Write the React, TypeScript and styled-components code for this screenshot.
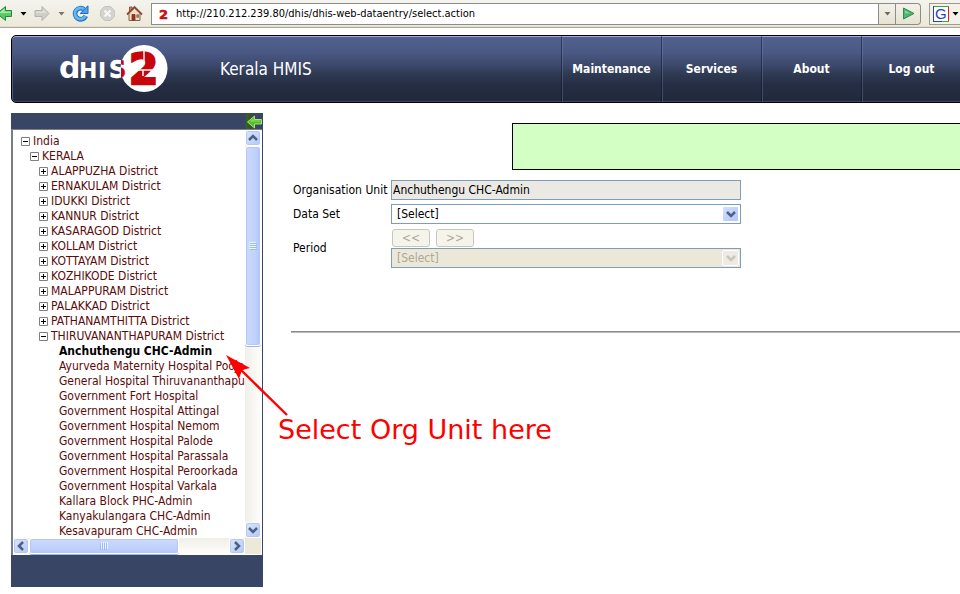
import React from "react";
import styled, { createGlobalStyle, css } from "styled-components";

const GlobalStyle = createGlobalStyle`
  *, *::before, *::after { box-sizing: border-box; }
  body {
    margin: 0;
    overflow: hidden;
    background: #fff;
    color: #000;
    font: 12px/15px "DejaVu Sans Condensed", "DejaVu Sans", sans-serif;
  }
  button, input, select { font: inherit; color: inherit; margin: 0; }
  ul { list-style: none; margin: 0; padding: 0; }
`;

const Page = styled.div`
  position: relative;
  height: 100vh;
  display: flex;
  flex-direction: column;
  overflow: hidden;
`;

/* ---------- browser toolbar ---------- */

const BrowserBar = styled.div`
  flex: none;
  height: 28px;
  display: flex;
  align-items: center;
  background: linear-gradient(#f4f3ee, #ece9d8);
  border-bottom: 1px solid #aca899;
  box-shadow: inset 0 -1px #e2dfce;
`;

const NavTools = styled.div`
  flex: none;
  width: 151px;
  display: flex;
  align-items: center;
`;

const ToolButton = styled.button<{ $w: number }>`
  width: ${(p) => p.$w}px;
  height: 20px;
  display: flex;
  align-items: center;
  justify-content: center;
  padding: 0;
  border: 0;
  background: none;
  svg { flex: none; display: block; }
`;

const AddressBox = styled.div`
  flex: 1;
  height: 22px;
  display: flex;
  align-items: center;
  padding-left: 6px;
  background: #fff;
  border: 1px solid #8c8c8c;
`;

const AddressInput = styled.input`
  flex: 1;
  min-width: 0;
  height: 18px;
  padding: 0;
  border: 0;
  outline: 0;
  background: transparent;
  && { margin-left: 6px; font-size: 11px; }
`;

const BarButton = styled.button<{ $w: number; $round?: boolean }>`
  flex: none;
  width: ${(p) => p.$w}px;
  height: 22px;
  display: flex;
  align-items: center;
  justify-content: center;
  padding: 0;
  border: 1px solid #8c8c8c;
  border-left: 0;
  border-radius: ${(p) => (p.$round ? "0 4px 4px 0" : "0")};
  background: linear-gradient(#f3f1e8, #e6e3d3);
`;

const SearchEngine = styled.button`
  flex: none;
  width: 31px;
  height: 22px;
  display: flex;
  align-items: center;
  gap: 3px;
  padding: 0 0 0 3px;
  border: 1px solid #9d9b90;
  border-right: 0;
  background: #f3f1e8;
  && { margin-left: 8px; }
`;

/* ---------- application header ---------- */

const Header = styled.header`
  flex: none;
  height: 68px;
  display: flex;
  align-items: stretch;
  margin: 7px -8px 0 11px;
  padding-right: 6px;
  border: 1px solid #000;
  border-radius: 5px;
  color: #fff;
  background: linear-gradient(#53618f, #4a5884 25%, #3c486a 45%, #303b55 56%, #242d42 75%, #212a3c);
  box-shadow: inset 0 1px #a5abe0, inset 1px 0 #4d5a88, inset 0 -1px #3a4463;
`;

const Brand = styled.a`
  flex: none;
  width: 208px;
  display: flex;
  align-items: center;
  padding-left: 46px;
`;

const Title = styled.h1`
  flex: 1;
  align-self: center;
  margin: 0;
  font-size: 17px;
  line-height: 22px;
  font-weight: normal;
`;

const Menu = styled.nav`
  display: flex;
`;

const MenuLink = styled.a`
  width: 100px;
  display: flex;
  align-items: center;
  justify-content: center;
  color: #fff;
  font-weight: bold;
  text-decoration: none;
  border-left: 1px solid rgba(15, 20, 40, 0.5);
  box-shadow: inset 1px 0 rgba(130, 145, 190, 0.3);
`;

/* ---------- body ---------- */

const Body = styled.div`
  flex: 1;
  min-height: 0;
  display: flex;
  padding: 10px 0 7px 11px;
`;

const Sidebar = styled.aside`
  flex: none;
  width: 252px;
  display: flex;
  flex-direction: column;
  background: #384565;
`;

const SidebarTop = styled.div`
  flex: none;
  height: 16px;
  display: flex;
  justify-content: flex-end;
`;

const HideButton = styled.button`
  width: 17px;
  height: 16px;
  padding: 0;
  border: 0;
  background: linear-gradient(90deg, #2c6d10, #38542f 3px, #384565 9px);
  svg { display: block; }
`;

const SidebarFoot = styled.div`
  flex: none;
  height: 32px;
`;

const TreePane = styled.div`
  flex: 1;
  min-height: 0;
  display: grid;
  grid-template-columns: 1fr 16px;
  grid-template-rows: 1fr 16px;
  margin-right: 1px;
  padding: 0 1px 1px 0;
  border: 1px solid #7b7d84;
  border-width: 1px 0 0 2px;
  background: #fff;
`;

const TreeView = styled.div`
  min-height: 0;
  overflow: hidden;
  padding: 4px 0 0 8px;
`;

const Branch = styled.ul<{ $nested?: boolean }>`
  padding-left: ${(p) => (p.$nested ? "9px" : "0")};
`;

const TreeRow = styled.div<{ $leaf?: boolean }>`
  height: 15px;
  display: flex;
  align-items: center;
  gap: 3px;
  padding-left: ${(p) => (p.$leaf ? "11px" : "0")};
  white-space: nowrap;
`;

const Toggle = styled.button`
  flex: none;
  width: 9px;
  height: 9px;
  padding: 0;
  border: 0;
  background: none;
  svg { display: block; }
`;

const UnitLink = styled.a<{ $selected?: boolean }>`
  color: #5c0a0a;
  text-decoration: none;
  ${(p) => p.$selected && css`
    color: #000;
    font-weight: bold;
  `}
`;

const ScrollTrack = styled.div<{ $horizontal?: boolean }>`
  display: flex;
  flex-direction: ${(p) => (p.$horizontal ? "row" : "column")};
  min-height: 0;
  background: linear-gradient(${(p) => (p.$horizontal ? "180deg" : "90deg")}, #f0efe8, #fefefb);
`;

const ScrollButton = styled.button`
  flex: none;
  width: 16px;
  height: 16px;
  padding: 0;
  display: flex;
  align-items: center;
  justify-content: center;
  border: 1px solid #fff;
  border-radius: 3px;
  background: linear-gradient(135deg, #dbe5fe, #b4c8f8);
  box-shadow: inset 0 0 0 1px #b6c8f2;
`;

const ScrollThumb = styled.div<{ $horizontal?: boolean }>`
  flex: ${(p) => (p.$horizontal ? "149" : "198")} 0 0;
  display: flex;
  align-items: center;
  justify-content: center;
  border: 1px solid #fff;
  border-radius: 3px;
  background: linear-gradient(${(p) => (p.$horizontal ? "180deg" : "90deg")}, #cbdafd, #bfd0fb 70%, #b0c4f5);
  box-shadow: inset 0 0 0 1px #b4c7f5, 0 1px #a0b5de;
`;

const TrackRest = styled.div<{ $horizontal?: boolean }>`
  flex: ${(p) => (p.$horizontal ? "50" : "176")} 0 0;
`;

const ScrollCorner = styled.div`
  background: #ece9d8;
`;

/* ---------- data entry form ---------- */

const Main = styled.main`
  flex: 1;
  min-width: 0;
  padding: 10px 0 0 28px;
`;

const Message = styled.div`
  height: 47px;
  margin-left: 221px;
  border: 1px solid #000;
  border-right: 0;
  background: #d3ffc4;
`;

const Form = styled.form`
  display: grid;
  grid-template-columns: 98px minmax(0, 350px);
  align-items: center;
  row-gap: 4px;
  margin: 10px 0 0 2px;
`;

const Label = styled.label`
  white-space: nowrap;
`;

const UnitInput = styled.input`
  width: 100%;
  height: 20px;
  padding: 0 1px;
  border: 1px solid #7f9db9;
  border-radius: 0;
  outline: 0;
  background: #ebe9e4;
`;

const PeriodCell = styled.div`
  display: flex;
  flex-direction: column;
  gap: 1px;
  padding-top: 1px;
`;

const ButtonPair = styled.div`
  display: flex;
  gap: 6px;
  padding-left: 1px;
`;

const StepButton = styled.button`
  width: 38px;
  height: 18px;
  padding: 0;
  border: 1px solid #c9c7ba;
  border-radius: 3px;
  background: #f5f4ea;
  line-height: 16px;
  &:disabled { color: #aca899; }
`;

const SelectBox = styled.div`
  display: grid;
  grid-template-columns: 1fr 19px;
  align-items: center;
`;

const Select = styled.select`
  grid-area: 1 / 1 / 2 / 3;
  width: 100%;
  height: 20px;
  padding: 0 20px 0 5px;
  appearance: none;
  border: 1px solid #7f9db9;
  border-radius: 0;
  outline: 0;
  background: #fff;
  color: #000;
  &:disabled { background: #ebe8d8; color: #aca899; opacity: 1; }
`;

const SelectArrow = styled.span<{ $off?: boolean }>`
  grid-area: 1 / 2 / 2 / 3;
  width: 17px;
  height: 16px;
  display: flex;
  align-items: center;
  justify-content: center;
  border: 1px solid #fff;
  border-radius: 2px;
  background: ${(p) => (p.$off ? "#edebe3" : "linear-gradient(135deg, #d3e0fe, #b0c6f8)")};
  pointer-events: none;
`;

const Divider = styled.hr`
  margin: 63px 0 0;
  border: 0;
  border-top: 1px solid #8c8c8c;
  border-bottom: 1px solid #b8b8b8;
`;

/* ---------- annotation laid over the page ---------- */

const Callout = styled.div`
  position: absolute;
  left: 226px;
  top: 355px;
  pointer-events: none;
  color: #fe0000;
  svg { display: block; }
`;

const CalloutText = styled.p`
  margin: -4px 0 0 52px;
  font: 27px/34px "DejaVu Sans", sans-serif;
  white-space: nowrap;
`;

/* ---------- drawings ---------- */

const Caret = ({ color = "#000" }: { color?: string }) => (
  <svg width="7" height="4" viewBox="0 0 7 4"><path d="M.5 0h6L3.500 3.500z" fill={color} /></svg>
);

const Chevron = ({ turn = 0, color = "#4d6185" }: { turn?: number; color?: string }) => (
  <svg width="10" height="10" viewBox="0 0 10 10">
    <path d="M1 3L5 7L9 3" fill="none" stroke={color} strokeWidth="2.500" transform={`rotate(${turn} 5 5)`} />
  </svg>
);

const Grip = ({ vertical = false }: { vertical?: boolean }) => (
  <svg width="8" height="8" viewBox="0 0 8 8">
    <g transform={vertical ? "rotate(90 4 4)" : undefined}>
      <path d="M0 .5h7M0 2.500h7M0 4.500h7M0 6.500h7" stroke="#eef4fe" />
      <path d="M1 1.500h7M1 3.500h7M1 5.500h7M1 7.500h7" stroke="#8cb0f8" strokeOpacity=".7" />
    </g>
  </svg>
);

const BackIcon = () => (
  <svg width="14" height="17" viewBox="0 0 14 17">
    <path d="M-3 8.500L5.500 1.500v4H11.500v6H5.500V15.500z" fill="#58c868" stroke="#258a3b" />
    <path d="M-1 8.200L4.500 3.500v3H10.500v1.500z" fill="#a3ec9f" />
  </svg>
);

const ForwardIcon = () => (
  <svg width="16" height="17" viewBox="0 0 16 17">
    <path d="M15 8.500L8 1.500v4H1v6h7v4z" fill="#cfcec8" stroke="#b3b2ac" />
    <path d="M13 8L9 4v2.500H2v1.500z" fill="#e0dfda" />
  </svg>
);

const ReloadIcon = () => (
  <svg width="17" height="17" viewBox="0 0 17 17">
    <path d="M13.800 11A5.600 5.600 0 1 1 12 4.200" fill="none" stroke="#2269bd" strokeWidth="4.600" />
    <path d="M13.400 11.200A5.600 5.600 0 1 1 12 4.200" fill="none" stroke="#62b9f2" strokeWidth="2.800" />
    <path d="M16 .8V8.500H8.200z" fill="#4da4ea" stroke="#2269bd" />
  </svg>
);

const StopIcon = () => (
  <svg width="17" height="17" viewBox="0 0 17 17">
    <path d="M5.500 1.500h6l4 4v6l-4 4h-6l-4-4v-6z" fill="#d4d3cf" stroke="#c4c3bf" />
    <path d="M5.500 5.500l6 6M11.500 5.500l-6 6" stroke="#f8f8f6" strokeWidth="2" />
  </svg>
);

const HomeIcon = () => (
  <svg width="17" height="17" viewBox="0 0 17 17">
    <path d="M3.500 2h2.500v5h-2.500z" fill="#c98a6b" stroke="#8a5845" />
    <path d="M3 8L8.500 3L14 8v7.500H3z" fill="#f1dfc1" stroke="#8a6045" />
    <path d="M1 9.500L8.500 2L16 9.500" fill="none" stroke="#8b4a34" strokeWidth="1.800" />
    <path d="M6 9.500h3v5.500h-3z" fill="#a5311f" stroke="#7d2b1b" strokeWidth=".8" />
    <path d="M10.800 9.800h1.800v2.500h-1.800z" fill="#83b3d9" stroke="#795a45" strokeWidth=".8" />
  </svg>
);

const FavIcon = () => (
  <svg width="12" height="14" viewBox="0 0 12 14" aria-hidden="true">
    <text x="1" y="12" fontFamily="DejaVu Sans" fontWeight="bold" fontSize="13" fill="#c80d12" stroke="#c80d12" strokeWidth=".6">2</text>
  </svg>
);

const GoIcon = () => (
  <svg width="13" height="13" viewBox="0 0 13 13">
    <path d="M1.500 1L12 6.500L1.500 12z" fill="#4fb573" stroke="#2f8a50" />
    <path d="M3 3.500L8 6.300H3z" fill="#8ed5a4" />
  </svg>
);

const GoogleIcon = () => (
  <svg width="16" height="16" viewBox="0 0 16 16">
    <path d="M0 0h16v16H0z" fill="#fff" />
    <path d="M0 .5h16" stroke="#3aa53a" />
    <path d="M.5 0v16M0 15.500h10" stroke="#2440c8" />
    <path d="M15.500 1v15" stroke="#e02020" />
    <path d="M9 15.500h7" stroke="#39a939" />
    <text x="2" y="13" fontFamily="Liberation Sans" fontSize="15" fill="#1f3fc6">G</text>
  </svg>
);

const HideIcon = () => (
  <svg width="17" height="16" viewBox="0 0 17 16">
    <path d="M1.500 9L8.500 3V6.500H15.500v4.500H8.500v4z" fill="#57bb2a" stroke="#a6e47c" />
    <path d="M4 8.500L7.500 5.500v2H14v1z" fill="#8be054" />
  </svg>
);

const BoxIcon = ({ open }: { open: boolean }) => (
  <svg width="9" height="9" viewBox="0 0 9 9">
    <path d="M.5.5h8v8h-8z" fill="#fff" stroke="#808080" />
    <path d={open ? "M2 4.500h5" : "M2 4.500h5M4.500 2v5"} stroke="#000" />
  </svg>
);

const Logo = () => (
  <svg width="112" height="50" viewBox="0 0 112 50" role="img" aria-label="DHIS 2">
    <defs>
      <linearGradient id="s-split" gradientUnits="userSpaceOnUse" x1="0" y1="0" x2="112" y2="0">
        <stop offset=".56" stopColor="#fff" />
        <stop offset=".56" stopColor="#c7060b" />
      </linearGradient>
    </defs>
    <circle cx="86" cy="24.500" r="23.500" fill="#fff" />
    <g fontFamily="DejaVu Sans" fontWeight="bold" fill="#fff">
      <text x="1" y="34" fontSize="30">d</text>
      <text x="21" y="34" fontSize="22">H</text>
      <text x="40" y="34" fontSize="22">I</text>
    </g>
    <text x="51" y="34" fontFamily="DejaVu Sans" fontWeight="bold" fontSize="24" fill="url(#s-split)" stroke="url(#s-split)" strokeWidth=".6">S</text>
    <text x="71" y="40" fontFamily="DejaVu Sans" fontWeight="bold" fontSize="42" fill="#c7060b" stroke="#c7060b" strokeWidth="2.400">2</text>
    <path d="M86 6v14M72 26h28M85 26v6" stroke="#fff" strokeWidth="1.400" />
  </svg>
);

const Arrow = () => (
  <svg width="64" height="62" viewBox="0 0 64 62">
    <path d="M14 14L61 60" stroke="currentColor" strokeWidth="2.400" />
    <path d="M0 0L24 13L16 15L13 24z" fill="currentColor" />
  </svg>
);

/* ---------- data ---------- */

type Unit = { name: string; children?: Unit[]; closed?: boolean };

const closed = (name: string): Unit => ({ name: `${name} District`, closed: true });

const hospitals = [
  "Anchuthengu CHC-Admin",
  "Ayurveda Maternity Hospital Poojappura",
  "General Hospital Thiruvananthapuram",
  "Government Fort Hospital",
  "Government Hospital Attingal",
  "Government Hospital Nemom",
  "Government Hospital Palode",
  "Government Hospital Parassala",
  "Government Hospital Peroorkada",
  "Government Hospital Varkala",
  "Kallara Block PHC-Admin",
  "Kanyakulangara CHC-Admin",
  "Kesavapuram CHC-Admin",
];

const root: Unit = {
  name: "India",
  children: [
    {
      name: "KERALA",
      children: [
        ...["ALAPPUZHA", "ERNAKULAM", "IDUKKI", "KANNUR", "KASARAGOD", "KOLLAM", "KOTTAYAM", "KOZHIKODE", "MALAPPURAM", "PALAKKAD", "PATHANAMTHITTA"].map(closed),
        { name: "THIRUVANANTHAPURAM District", children: hospitals.map((name) => ({ name })) },
      ],
    },
  ],
};

const selectedUnit = "Anchuthengu CHC-Admin";

const TreeNode = ({ unit }: { unit: Unit }) => {
  const leaf = !unit.children && !unit.closed;
  return (
    <li>
      <TreeRow $leaf={leaf}>
        {!leaf && (
          <Toggle type="button" aria-label={`Toggle ${unit.name}`} aria-expanded={!unit.closed}>
            <BoxIcon open={!unit.closed} />
          </Toggle>
        )}
        <UnitLink href="#" $selected={unit.name === selectedUnit}>{unit.name}</UnitLink>
      </TreeRow>
      {unit.children && (
        <Branch $nested>
          {unit.children.map((child) => <TreeNode key={child.name} unit={child} />)}
        </Branch>
      )}
    </li>
  );
};

export default function App() {
  return (
    <Page>
      <GlobalStyle />
      <BrowserBar>
        <NavTools>
          <ToolButton $w={14} aria-label="Back"><BackIcon /></ToolButton>
          <ToolButton $w={19} aria-label="Back history"><Caret /></ToolButton>
          <ToolButton $w={18} aria-label="Forward"><ForwardIcon /></ToolButton>
          <ToolButton $w={20} aria-label="Forward history"><Caret color="#77756c" /></ToolButton>
          <ToolButton $w={19} aria-label="Reload"><ReloadIcon /></ToolButton>
          <ToolButton $w={35} aria-label="Stop"><StopIcon /></ToolButton>
          <ToolButton $w={19} aria-label="Home"><HomeIcon /></ToolButton>
        </NavTools>
        <AddressBox>
          <FavIcon />
          <AddressInput aria-label="Address" defaultValue="http://210.212.239.80/dhis/dhis-web-dataentry/select.action" />
        </AddressBox>
        <BarButton $w={17} aria-label="Address history"><Caret color="#6b6960" /></BarButton>
        <BarButton $w={25} $round aria-label="Go"><GoIcon /></BarButton>
        <SearchEngine aria-label="Search engine"><GoogleIcon /><Caret /></SearchEngine>
      </BrowserBar>

      <Header>
        <Brand href="#"><Logo /></Brand>
        <Title>Kerala HMIS</Title>
        <Menu>
          <MenuLink href="#">Maintenance</MenuLink>
          <MenuLink href="#">Services</MenuLink>
          <MenuLink href="#">About</MenuLink>
          <MenuLink href="#">Log out</MenuLink>
        </Menu>
      </Header>

      <Body>
        <Sidebar>
          <SidebarTop>
            <HideButton type="button" aria-label="Hide menu"><HideIcon /></HideButton>
          </SidebarTop>
          <TreePane>
            <TreeView><Branch><TreeNode unit={root} /></Branch></TreeView>
            <ScrollTrack>
              <ScrollButton aria-label="Scroll up"><Chevron turn={180} /></ScrollButton>
              <ScrollThumb><Grip /></ScrollThumb>
              <TrackRest />
              <ScrollButton aria-label="Scroll down"><Chevron /></ScrollButton>
            </ScrollTrack>
            <ScrollTrack $horizontal>
              <ScrollButton aria-label="Scroll left"><Chevron turn={90} /></ScrollButton>
              <ScrollThumb $horizontal><Grip vertical /></ScrollThumb>
              <TrackRest $horizontal />
              <ScrollButton aria-label="Scroll right"><Chevron turn={-90} /></ScrollButton>
            </ScrollTrack>
            <ScrollCorner />
          </TreePane>
          <SidebarFoot />
        </Sidebar>

        <Main>
          <Message role="status" />
          <Form>
            <Label htmlFor="unit">Organisation Unit</Label>
            <UnitInput id="unit" readOnly value={selectedUnit} />
            <Label htmlFor="dataset">Data Set</Label>
            <SelectBox>
              <Select id="dataset"><option>[Select]</option></Select>
              <SelectArrow><Chevron /></SelectArrow>
            </SelectBox>
            <Label htmlFor="period">Period</Label>
            <PeriodCell>
              <ButtonPair>
                <StepButton type="button" disabled>&lt;&lt;</StepButton>
                <StepButton type="button" disabled>&gt;&gt;</StepButton>
              </ButtonPair>
              <SelectBox>
                <Select id="period" disabled><option>[Select]</option></Select>
                <SelectArrow $off><Chevron color="#c9c7ba" /></SelectArrow>
              </SelectBox>
            </PeriodCell>
          </Form>
          <Divider />
        </Main>
      </Body>

      <Callout>
        <Arrow />
        <CalloutText>Select Org Unit here</CalloutText>
      </Callout>
    </Page>
  );
}
